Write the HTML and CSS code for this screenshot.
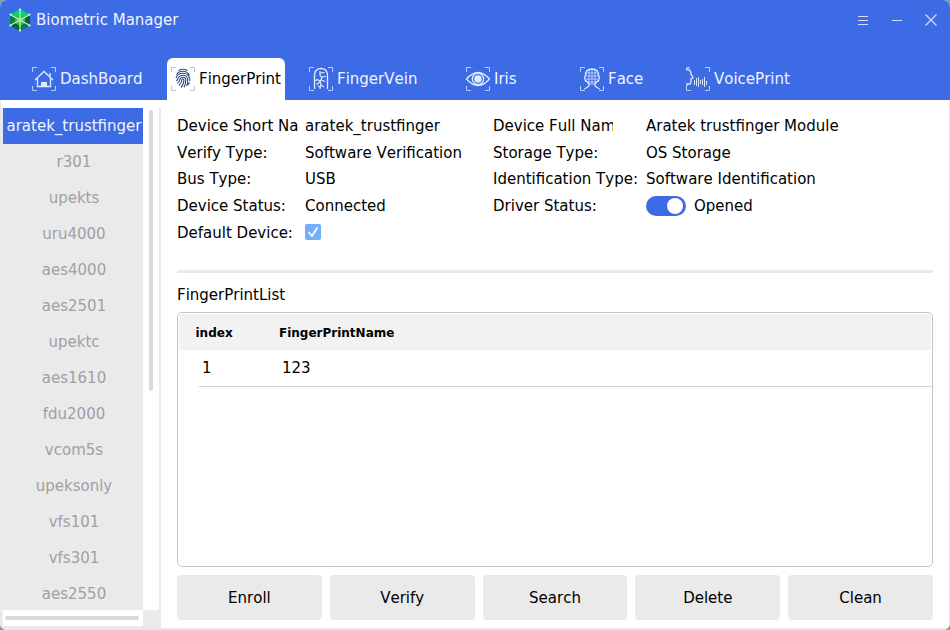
FILE: index.html
```html
<!DOCTYPE html>
<html lang="en">
<head>
<meta charset="utf-8">
<title>Biometric Manager</title>
<link rel="stylesheet" href="styles.css">
</head>
<body>
<div class="window">
  <header class="header">
    <div class="titlebar">
      <svg class="logo" width="22" height="24" viewBox="0 0 22 24">
        <path fill="#087f45" d="M11 1 21 6.500V17.500L11 23 1 17.500V6.500Z"/>
        <path fill="#0bce7d" d="M11 1 21 6.500 11 12 1 6.500Z"/>
        <path fill="#05652f" d="M1 17.500 11 12V23ZM21 6.500V17.500L11 12Z"/>
        <path fill="#35b85a" d="M11 6 16 9V15L11 18 6 15V9Z"/>
        <path fill="none" stroke="#c8f5ce" stroke-width="1.100" d="M11 1V23M1 6.500 21 17.500M21 6.500 1 17.500"/>
        <g fill="#d9f7e3"><circle cx="11" cy="1.500" r="1.100"/><circle cx="11" cy="22.500" r="1.100"/><circle cx="1.500" cy="6.500" r="1.100"/><circle cx="20.500" cy="6.500" r="1.100"/><circle cx="1.500" cy="17.500" r="1.100"/><circle cx="20.500" cy="17.500" r="1.100"/></g>
        <circle cx="11" cy="12" r="2.500" fill="#a0e878"/>
      </svg>
      <h1 class="title">Biometric Manager</h1>
      <svg class="controls" width="80" height="14" viewBox="0 0 80 14">
        <path d="M1 3.500H11M1 7.500H11M1 11.500H11M35 7.500H45"/>
        <path d="M68.500 1.500 79.500 12.500M79.500 1.500 68.500 12.500" stroke-width="1.200"/>
      </svg>
    </div>
    <nav class="tabs">
      <div class="tab"><svg class="icon" viewBox="0 0 24 24">
        <path class="corner" d="M.500 5V.500H5M19 .500H23.500V5M.500 19V23.500H5M19 23.500H23.500V19"/>
        <path d="M3 13 12 4.500 21 13M5.500 11.500V19.500H18.500V11.500M18 6V10"/><path fill="#dcecff" stroke="none" d="M9 15H15V19H9Z"/></svg>DashBoard</div>
      <div class="tab active"><svg class="icon" viewBox="0 0 24 24">
        <path class="corner" d="M.500 5V.500H5M19 .500H23.500V5M.500 19V23.500H5M19 23.500H23.500V19"/>
        <path d="M7.500 3.500Q12 1 16.500 3.500M5.500 7.500Q7.500 4.300 12 4.300T18.500 8.500M5 11Q6.500 6.300 12 6.300T18.700 12V14M5.300 14Q6.500 13 7 11.500 8.500 8.300 12 8.300T16.700 12V16.500L15.500 19M6.300 16.500Q8.500 15 8.800 12.500 9.500 10.200 12 10.200T14.800 12.500Q14.800 17 13 20.500M7.800 18.500Q10.500 16.500 10.700 13 12 11 12.900 13 12.900 17.500 10 20.500M17 18 18.500 15.500"/></svg>FingerPrint</div>
      <div class="tab"><svg class="icon" viewBox="0 0 24 24">
        <path class="corner" d="M.500 5V.500H5M19 .500H23.500V5M.500 19V23.500H5M19 23.500H23.500V19"/>
        <path d="M5.500 22V8Q6 1.500 12 1.500T18.500 8V22"/><path stroke-width="1.200" d="M11 4V8L13 11 11 14 12 17 11 22M11 6 15.500 5.500M12.500 10 17 9.500M12 13 16 14.500M11 14 8 12.500 6.500 14M11 15 7.500 17.500M12 18 15 20M11 20 9 19"/></svg>FingerVein</div>
      <div class="tab"><svg class="icon" viewBox="0 0 24 24">
        <path class="corner" d="M.500 5V.500H5M19 .500H23.500V5M.500 19V23.500H5M19 23.500H23.500V19"/>
        <path d="M.500 12Q12-1 23.500 12Q12 25 .500 12Z"/><circle cx="12" cy="12" r="5.700"/><circle cx="12" cy="12" r="3.800" fill="#dcecff" stroke="none"/></svg>Iris</div>
      <div class="tab"><svg class="icon" viewBox="0 0 24 24">
        <path class="corner" d="M.500 5V.500H5M19 .500H23.500V5M.500 19V23.500H5M19 23.500H23.500V19"/>
        <path d="M5.500 9Q5 2 12 2T18.500 9L19.500 10 18.500 14H17.500L15 17V19L19.500 22M5.500 9 4.500 10 5.500 14H6.500L9 17V19L4.500 22"/><path stroke-width=".7" d="M9 3V16M12 2V17M15 3V16M6 6H18M6 9H18M6 12H18M8 15H16M9 17H15"/></svg>Face</div>
      <div class="tab"><svg class="icon" viewBox="0 0 24 24">
        <path class="corner" d="M19 .500H23.500V5M.500 19V23.500H5M19 23.500H23.500V19M.500 4V.500H4"/>
        <path d="M1 2Q5 3 5 7L7 11 5 12V15L4 17H1V19"/><path class="wave" d="M8.500 13V18M10.500 11V19M12.500 10V20M14.500 13V17M16.500 12V18M18.500 10V20M20.500 14V18"/></svg>VoicePrint</div>
    </nav>
  </header>
  <main class="body">
    <aside class="sidebar">
      <ul class="devices">
        <li class="selected">aratek_trustfinger</li><li>r301</li><li>upekts</li><li>uru4000</li><li>aes4000</li><li>aes2501</li><li>upektc</li><li>aes1610</li><li>fdu2000</li><li>vcom5s</li><li>upeksonly</li><li>vfs101</li><li>vfs301</li><li>aes2550</li>
      </ul>
      <div class="vscroll"><div class="vthumb"></div></div>
      <div class="hscroll"><div class="hthumb"></div></div>
    </aside>
    <section class="content">
      <div class="info">
        <span>Device Short Na</span><span>aratek_trustfinger</span><span class="clipped">Device Full Nam</span><span>Aratek trustfinger Module</span>
        <span class="low">Verify Type:</span><span class="low">Software Verification</span><span class="low">Storage Type:</span><span class="low">OS Storage</span>
        <span>Bus Type:</span><span>USB</span><span>Identification Type:</span><span>Software Identification</span>
        <span>Device Status:</span><span>Connected</span><span>Driver Status:</span><span class="status"><i class="switch"></i>Opened</span>
        <span>Default Device:</span><svg class="check" width="16" height="16" viewBox="0 0 16 16"><rect width="16" height="16" rx="2" fill="#72b0fc"/><path d="M3.500 8 7 12 12.500 3.500" fill="none" stroke="#fff" stroke-width="1.700"/></svg>
      </div>
      <h2 class="list-title">FingerPrintList</h2>
      <div class="table">
        <div class="thead"><span>index</span><span>FingerPrintName</span></div>
        <div class="row"><span>1</span><span>123</span></div>
      </div>
      <div class="actions"><button>Enroll</button><button>Verify</button><button>Search</button><button>Delete</button><button>Clean</button></div>
    </section>
  </main>
</div>
</body>
</html>
```
FILE: styles.css
```css
* { box-sizing: border-box; }
body { margin: 0; background: #829da5; font: 15px/18px "DejaVu Sans", sans-serif; font-kerning: none; color: #000; }
.window { width: 950px; height: 630px; border-radius: 7px; overflow: hidden; background: #fff; display: flex; flex-direction: column; }
.header { height: 100px; background: #3d6be5; color: #f0f4ff; display: flex; flex-direction: column; justify-content: space-between; }
.titlebar { display: flex; align-items: center; height: 40px; padding: 0 13px 0 9px; }
.title { font-size: 15px; font-weight: 400; margin: 0 auto 0 5px; }
.controls { fill: none; stroke: #d5dffa; }
.tabs { display: grid; grid-template-columns: 139px 138px 157px 114px 106px auto; justify-items: start; justify-content: start; padding-left: 28px; height: 42px; }
.tab { display: flex; align-items: center; gap: 4px; padding: 0 4px; height: 42px; white-space: nowrap; }
.tab.active { width: 118px; background: #fff; color: #000; border-radius: 6px 6px 0 0; }
.icon { width: 24px; height: 24px; flex: none; fill: none; stroke: #dcecff; stroke-width: 1.300; }
.icon .corner { stroke: #b8cbfa; stroke-width: 1; }
.icon .wave { stroke-width: 1; shape-rendering: crispEdges; }
.active .icon { stroke: #284d8a; stroke-width: 1.100; }
.active .icon .corner { stroke: #c0c0c8; }
.body { flex: 1; display: flex; min-height: 0; border: solid #e7e7e7; border-width: 0 1px 2px; }
.sidebar { width: 160px; margin-top: 8px; background: #eaeaea; padding-left: 2px; display: grid; grid-template: 502px 16px / 140px 16px; }
.devices { list-style: none; margin: 0; padding: 0; color: #a0a0a4; text-align: center; overflow: hidden; }
.devices li { height: 36px; line-height: 36px; padding-left: 2px; white-space: nowrap; }
.devices .selected { background: #3d6be5; color: #f0f4ff; }
.vscroll { background: #fff; padding: 2px 6px; }
.vthumb { width: 4px; height: 281px; background: #d9d9d9; border-radius: 2px; }
.hscroll { background: #fff; padding: 6px 4px 6px 2px; }
.hthumb { height: 4px; background: #d9d9d9; border-radius: 2px; }
.content { flex: 1; padding: 12px 16px 8px; display: flex; flex-direction: column; }
.info { display: grid; grid-template-columns: 128px 188px 153px 1fr; grid-template-rows: 27px 26px 27px 27px 27px; align-items: center; white-space: nowrap; height: 161px; border-bottom: 3px solid #eaeaea; }
.clipped { width: 120px; overflow: hidden; }
.low { padding-top: 2px; }
.check { margin-bottom: 1px; }
.status { display: flex; align-items: center; gap: 8px; }
.switch { width: 40px; height: 20px; border-radius: 10px; background: #3d6be5; padding: 2px 3px; display: flex; justify-content: flex-end; }
.switch::after { content: ""; width: 16px; height: 16px; border-radius: 50%; background: #fff; }
.list-title { font-size: 15px; font-weight: 400; line-height: 18px; margin: 13px 0 8px; }
.table { height: 255px; border: 1px solid #c4c4c4; border-radius: 5px; padding: 1px; }
.thead { height: 36px; background: #f2f2f2; font-weight: 700; font-size: 12px; display: grid; grid-template-columns: 83.5px 1fr; align-items: center; padding: 2px 0 0 16.5px; border-radius: 3px 3px 0 0; }
.row { height: 37px; margin-left: 20px; border-bottom: 1px solid #cdcdcd; display: grid; grid-template-columns: 80px 1fr; align-items: center; padding-left: 3px; }
.actions { display: grid; grid-template-columns: repeat(5, 1fr); gap: 8px; margin-top: 8px; height: 45px; }
.actions button { border: 0; border-radius: 4px; background: #eaeaea; font: inherit; font-kerning: none; color: #000; padding: 0; }
```
